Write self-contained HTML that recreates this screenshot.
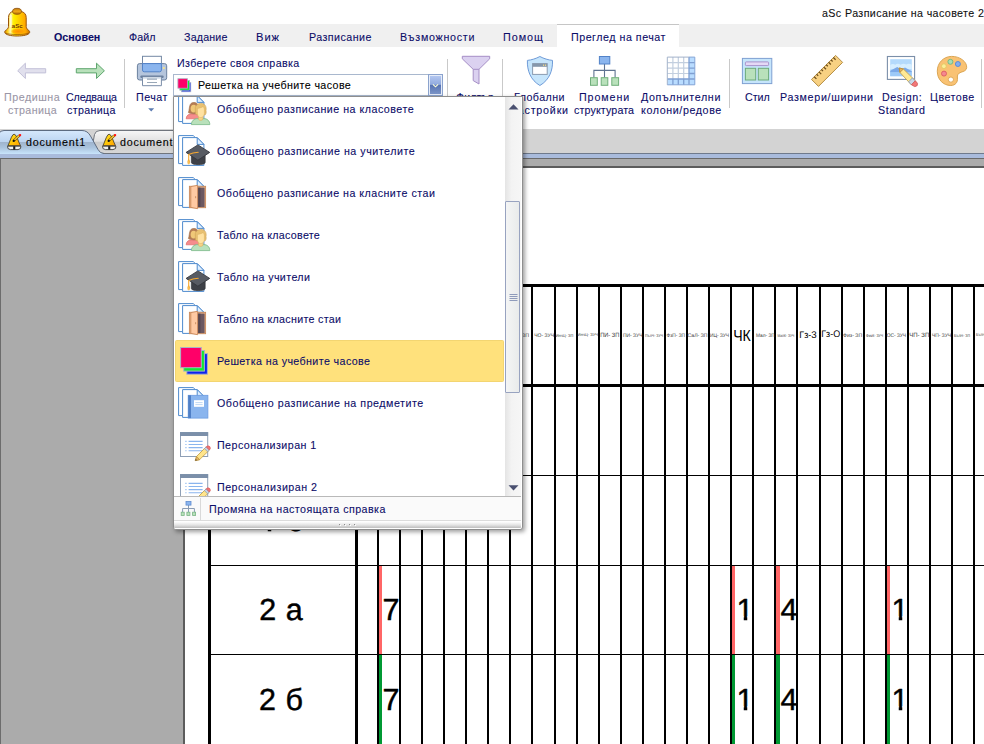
<!DOCTYPE html>
<html lang="bg">
<head>
<meta charset="utf-8">
<title>aSc Разписание на часовете</title>
<style>
*{box-sizing:border-box;margin:0;padding:0}
html,body{width:984px;height:744px;overflow:hidden;background:#fff}
body{position:relative;font-family:"Liberation Sans",sans-serif;font-size:11.5px;color:#0c0c68;-webkit-text-stroke:.1px currentColor}
.a{position:absolute}
.t{position:absolute;white-space:nowrap;line-height:14px;height:14px;font-size:11.5px}
.c{text-align:center}
svg{position:absolute;overflow:visible}
#menubar{left:0;top:24px;width:984px;height:23px;background:#f0f0f0}
#acttab{left:557px;top:24px;width:122px;height:23px;background:#fff;border-top:1px solid #c6c6c6}
.sep{position:absolute;width:1px;top:59px;height:49px;background:#c9c9c9}
#tabstrip{left:0;top:129px;width:984px;height:24px;background:#d3d3d3}
#bluestrip{left:0;top:153px;width:984px;height:6px;background:#a9bbdc;border-top:1px solid #6f7a8c;border-bottom:1px solid #6a6a6a}
#work{left:0;top:159px;width:984px;height:585px;background:#ababab;border-left:1px solid #6c6c6c}
#page{left:183px;top:166px;width:801px;height:578px;background:#fff;border-left:2px solid #5c5c5c;border-top:2px solid #5c5c5c}
#popup{left:173px;top:96px;width:350px;height:434px;background:#fff;border:1px solid #8e8e8e;border-radius:0 0 3px 3px;box-shadow:2px 2px 4px rgba(0,0,0,.38)}
#hl{background:#ffe17c;border:1px solid #f3d571;border-radius:1.5px}
#combo{left:173px;top:74px;width:270px;height:22px;background:#fff;border:1px solid #a9b8ce}
#combobtn{left:428px;top:74px;width:15px;height:22px;background:linear-gradient(#b6c9f2 0%,#92abde 47%,#5672b2 50%,#7f98c9 100%);border:1px solid #8ba3cd;box-shadow:inset 0 0 0 1px #e6ecf8}
#sbar{left:331px;top:0;width:16px;height:399px;background:linear-gradient(90deg,#e4e4e4,#f3f3f3 40%,#f6f6f6)}
#thumb{left:331px;top:104px;width:15px;height:192px;background:linear-gradient(90deg,#f4f5f5,#e9ebeb);border:1px solid #98a3c0;border-radius:1px}
#pfoot{left:0;top:399px;width:347px;height:25px;background:#fafafa;border-top:1px solid #b9b9b9;border-bottom:1px solid #dcdcdc}
#pgut{left:26px;top:401px;width:1px;height:22px;background:#d9d9d9}
#pgrip{left:0;top:424px;width:347px;height:8px;background:linear-gradient(#fff 0,#fdfdfd 12%,#e4e4e4 50%,#bebebe 87%,#fff 88%);border-radius:0 0 2px 2px}
</style>
</head>
<body>

<div class="a" id="menubar"></div><div class="a" id="acttab"></div>
<div class="a" id="tabstrip"></div><div class="a" id="bluestrip"></div>
<div class="a" id="work"></div><div class="a" id="page"></div>
<svg class="a" id="tbl" style="left:0;top:0" width="984" height="744" viewBox="0 0 984 744" font-family="Liberation Sans, sans-serif">
<g fill="#000" shape-rendering="crispEdges">
<rect x="208" y="284" width="776" height="3"/>
<rect x="208" y="384" width="776" height="3"/>
<rect x="208" y="475" width="776" height="1"/>
<rect x="208" y="565" width="776" height="1"/>
<rect x="208" y="654" width="776" height="1"/>
<rect x="208" y="284" width="3" height="460"/>
<rect x="355" y="284" width="3" height="460"/>
<rect x="377" y="286" width="2" height="458"/>
<rect x="399" y="286" width="2" height="458"/>
<rect x="421" y="286" width="2" height="458"/>
<rect x="443" y="286" width="2" height="458"/>
<rect x="465" y="286" width="2" height="458"/>
<rect x="487" y="286" width="2" height="458"/>
<rect x="509" y="286" width="2" height="458"/>
<rect x="531" y="286" width="2" height="458"/>
<rect x="554" y="286" width="2" height="458"/>
<rect x="576" y="286" width="2" height="458"/>
<rect x="598" y="286" width="2" height="458"/>
<rect x="620" y="286" width="2" height="458"/>
<rect x="642" y="286" width="2" height="458"/>
<rect x="664" y="286" width="2" height="458"/>
<rect x="686" y="286" width="2" height="458"/>
<rect x="708" y="286" width="2" height="458"/>
<rect x="730" y="286" width="2" height="458"/>
<rect x="752" y="286" width="2" height="458"/>
<rect x="774" y="286" width="2" height="458"/>
<rect x="796" y="286" width="2" height="458"/>
<rect x="819" y="286" width="2" height="458"/>
<rect x="841" y="286" width="2" height="458"/>
<rect x="863" y="286" width="2" height="458"/>
<rect x="885" y="286" width="2" height="458"/>
<rect x="907" y="286" width="2" height="458"/>
<rect x="929" y="286" width="2" height="458"/>
<rect x="951" y="286" width="2" height="458"/>
<rect x="973" y="286" width="2" height="458"/>
</g>
<g shape-rendering="crispEdges">
<rect x="379" y="566" width="3" height="88" fill="#ff6666"/>
<rect x="379" y="655" width="3" height="89" fill="#009933"/>
<rect x="732" y="566" width="3" height="88" fill="#ff6666"/>
<rect x="732" y="655" width="3" height="89" fill="#009933"/>
<rect x="776" y="566" width="4" height="88" fill="#ff6666"/>
<rect x="776" y="655" width="4" height="89" fill="#009933"/>
<rect x="887" y="566" width="3" height="88" fill="#ff6666"/>
<rect x="887" y="655" width="3" height="89" fill="#009933"/>
</g>
<g fill="#000" font-size="30.5" text-rendering="geometricPrecision" stroke="#000" stroke-width=".45" stroke-linejoin="round" style="-webkit-text-stroke:0;word-spacing:1px">
<text x="282.4" y="531" text-anchor="middle">1 б</text>
<text x="281" y="620" text-anchor="middle">2 а</text>
<text x="281" y="710" text-anchor="middle">2 б</text>
<text x="382.6" y="620">7</text>
<text x="736.6" y="620">1</text>
<text x="780.4" y="620">4</text>
<text x="891.6" y="620">1</text>
<text x="382.6" y="710">7</text>
<text x="736.6" y="710">1</text>
<text x="780.4" y="710">4</text>
<text x="891.6" y="710">1</text>
</g>
<g fill="#fff">
<rect x="737.5" y="616.3" width="6.25" height="5"/><rect x="747.25" y="616.3" width="4.75" height="5"/>
<rect x="892.5" y="616.3" width="6.25" height="5"/><rect x="902.25" y="616.3" width="4.75" height="5"/>
<rect x="737.5" y="706.3" width="6.25" height="5"/><rect x="747.25" y="706.3" width="4.75" height="5"/>
<rect x="892.5" y="706.3" width="6.25" height="5"/><rect x="902.25" y="706.3" width="4.75" height="5"/>
<rect x="261" y="527" width="6.75" height="5.5"/><rect x="271.25" y="527" width="7" height="5.5"/>
</g>
<g fill="#3a3a3a" style="-webkit-text-stroke:0" text-rendering="geometricPrecision">
<text x="511" y="337" font-size="5.2" textLength="18.0" lengthAdjust="spacingAndGlyphs">ЧО- ЗП</text>
<text x="534.2" y="337" font-size="5.2" textLength="19.8" lengthAdjust="spacingAndGlyphs">ЧО- ЗУЧ</text>
<text x="555.8" y="337" font-size="4.1" textLength="17.5" lengthAdjust="spacingAndGlyphs">ИнчЦ- ЗП</text>
<text x="577.5" y="335.6" font-size="4.1" textLength="20.5" lengthAdjust="spacingAndGlyphs">ИнчЦ- ЗУЧ</text>
<text x="600.3" y="337.3" font-size="6.2" textLength="18.9" lengthAdjust="spacingAndGlyphs">ПИ- ЗП</text>
<text x="623" y="337" font-size="5.2" textLength="19.5" lengthAdjust="spacingAndGlyphs">ПИ- ЗУЧ</text>
<text x="645" y="337" font-size="4.1" textLength="18.0" lengthAdjust="spacingAndGlyphs">ПълЧ- ЗУЧ</text>
<text x="666.5" y="337" font-size="5.2" textLength="18.5" lengthAdjust="spacingAndGlyphs">ФзП- ЗП</text>
<text x="687.5" y="337" font-size="5.2" textLength="20.0" lengthAdjust="spacingAndGlyphs">СаЛ- ЗП</text>
<text x="710" y="337" font-size="5.2" textLength="19.0" lengthAdjust="spacingAndGlyphs">ИЦ- ЗУЧ</text>
<text x="733.2" y="341" font-size="16" fill="#000" textLength="17.6" lengthAdjust="spacingAndGlyphs">ЧК</text>
<text x="756" y="337" font-size="5.2" textLength="18.7" lengthAdjust="spacingAndGlyphs">Мал- ЗП</text>
<text x="777.5" y="337" font-size="4.1" textLength="16.7" lengthAdjust="spacingAndGlyphs">МалК- ЗУЧ</text>
<text x="799.3" y="337.5" font-size="9.6" fill="#000" textLength="17.5" lengthAdjust="spacingAndGlyphs">Гз-З</text>
<text x="821.2" y="337.2" font-size="9.6" fill="#000" textLength="19.0" lengthAdjust="spacingAndGlyphs">Гз-О</text>
<text x="843" y="337" font-size="5.2" textLength="19.2" lengthAdjust="spacingAndGlyphs">Физ- ЗП</text>
<text x="866" y="337" font-size="4.1" textLength="17.0" lengthAdjust="spacingAndGlyphs">ФизК- ЗУЧ</text>
<text x="886.8" y="337" font-size="5.2" textLength="19.2" lengthAdjust="spacingAndGlyphs">ОС- ЗУЧ</text>
<text x="909.3" y="337.3" font-size="6.2" textLength="19.9" lengthAdjust="spacingAndGlyphs">ЧП- ЗП</text>
<text x="932" y="337" font-size="5.2" textLength="19.0" lengthAdjust="spacingAndGlyphs">ЧП- ЗУЧ</text>
<text x="954" y="337" font-size="4.1" textLength="16.0" lengthAdjust="spacingAndGlyphs">БълН- ЗП</text>
<text x="976" y="336" font-size="4.1" textLength="17.0" lengthAdjust="spacingAndGlyphs">БълН- ЗУЧ</text>
</g>
</svg>
<div class="sep" style="left:124px"></div>
<div class="sep" style="left:447px"></div>
<div class="sep" style="left:502px"></div>
<div class="sep" style="left:729px"></div>
<div class="sep" style="left:981px"></div>
<div class="a" id="combo"></div>
<div class="a" id="combobtn"></div>
<svg id="doctabs" style="left:0;top:129px" width="200" height="30" viewBox="0 0 200 30">
<defs>
<linearGradient id="gAct" x1="0" y1="0" x2="0" y2="1"><stop offset="0" stop-color="#d3e6fb"/><stop offset=".05" stop-color="#d3e6fb"/><stop offset=".47" stop-color="#bdd5f1"/><stop offset=".5" stop-color="#9fb4cd"/><stop offset=".72" stop-color="#aac3dd"/><stop offset="1" stop-color="#c8e4fb"/></linearGradient>
<linearGradient id="gIn" x1="0" y1="0" x2="0" y2="1"><stop offset="0" stop-color="#f7f7f7"/><stop offset=".47" stop-color="#e1e1e1"/><stop offset=".5" stop-color="#cbcbcb"/><stop offset="1" stop-color="#d7d7d7"/></linearGradient>
</defs>
<path d="M91 24.5 L94.5 5.5 Q95.5 1.5 100 1.5 L176 1.5 Q182 1.5 185 7 L195 24.5 Z" fill="url(#gIn)" stroke="#70757d" stroke-width="1"/>
<path d="M-1 25 L-1 4.5 Q0 1.5 4 1.5 L82 1.5 Q87.5 1.5 90.5 7 L98 20.5 Q100 24.5 104 24.5 L104 25 Z" fill="url(#gAct)"/><path d="M-1 4.5 Q0 1.5 4 1.5 L82 1.5 Q87.5 1.5 90.5 7 L98 20.5 Q100 24.5 104 24.5" fill="none" stroke="#5d6b80" stroke-width="1"/>
<rect x="0" y="25" width="104" height="4" fill="#a9bbdc"/>
</svg>

<svg id="ricons" style="left:0;top:0" width="984" height="160" viewBox="0 0 984 160" font-family="Liberation Sans, sans-serif">
<defs>
<linearGradient id="gBell" x1="0" y1="0" x2="1" y2="0"><stop offset="0" stop-color="#d98a00"/><stop offset=".12" stop-color="#ffd21c"/><stop offset=".22" stop-color="#fff6b0"/><stop offset=".36" stop-color="#fff000"/><stop offset=".62" stop-color="#ffc800"/><stop offset=".85" stop-color="#ffa400"/><stop offset="1" stop-color="#c87400"/></linearGradient>
<radialGradient id="gBellLow" cx=".5" cy=".5" r=".5"><stop offset="0" stop-color="#ff8a00" stop-opacity=".95"/><stop offset=".7" stop-color="#ff9a00" stop-opacity=".7"/><stop offset="1" stop-color="#ffa800" stop-opacity="0"/></radialGradient>
<linearGradient id="gTb" x1="0" y1="0" x2="1" y2="1"><stop offset="0" stop-color="#ffe828"/><stop offset=".5" stop-color="#ffc808"/><stop offset="1" stop-color="#ff9c00"/></linearGradient>
<linearGradient id="gKnob" x1="0" y1="0" x2="0" y2="1"><stop offset="0" stop-color="#c07810"/><stop offset=".5" stop-color="#f0a818"/><stop offset="1" stop-color="#b06808"/></linearGradient>
</defs>
<!-- app bell -->
<g>
<path d="M8.5 26.5 L8.5 17.5 C8.5 14 10.5 12 13 11.4 L21 11.4 C24 12 26.2 14 26.2 17.5 L26.2 26.5 C26.2 28.5 27.5 29.5 28.8 30.4 C29.6 31 29.8 31.8 29.6 32.6 C29 34.8 23.5 36 17.2 36 C11 36 5.4 34.8 4.8 32.6 C4.6 31.8 4.8 31 5.6 30.4 C7 29.5 8.5 28.5 8.5 26.5 Z" fill="url(#gBell)" stroke="#9a5408" stroke-width="1"/>
<path d="M5.6 33 C8 35 26 35 28.8 33" fill="none" stroke="#8a4a06" stroke-width=".9" opacity=".75"/>
<ellipse cx="18" cy="31.4" rx="7.4" ry="3.2" fill="url(#gBellLow)"/>
<path d="M10.9 15.5 L10.9 26.5" stroke="#fffbe0" stroke-width="1.7" stroke-linecap="round" opacity=".75"/>
<ellipse cx="17" cy="11.3" rx="4.4" ry="3" fill="url(#gKnob)" stroke="#8a4e0a" stroke-width=".8"/>
<text x="17.2" y="28.3" font-size="6" font-weight="bold" text-anchor="middle" fill="#733808" style="-webkit-text-stroke:0">aSc</text>
</g>
<!-- arrows -->
<path d="M17.7 70.8 L25.4 63.2 L25.4 68.7 L45.7 68.7 L45.7 72.9 L25.4 72.9 L25.4 78.5 Z" fill="#e1e0ed" stroke="#c3c1d8" stroke-width="1" stroke-linejoin="miter"/>
<path d="M104.4 70.8 L96.5 63.2 L96.5 68.7 L76.3 68.7 L76.3 72.9 L96.5 72.9 L96.5 78.5 Z" fill="#b9e1bb" stroke="#5ea66e" stroke-width="1" stroke-linejoin="miter"/>
<!-- printer -->
<g>
<rect x="142.5" y="56.3" width="18.9" height="8" fill="#fff" stroke="#7388a4" stroke-width="1"/>
<rect x="137.4" y="63.6" width="29.3" height="16.4" rx="2.2" fill="#b5c5dc" stroke="#6b809e" stroke-width="1"/>
<path d="M142.5 63.6 H161.4 V70 Q161.4 71.8 159.6 71.8 H144.3 Q142.5 71.8 142.5 70 Z" fill="#8bb5ee" stroke="#5282c8" stroke-width="1"/>
<circle cx="163.9" cy="67.9" r="1" fill="#ffe880"/>
<rect x="140.3" y="75.6" width="23.4" height="2.4" rx="1.2" fill="#6b809e"/>
<path d="M142.5 77 H161.4 V85.7 H142.5 Z" fill="#fff" stroke="#7a8da8" stroke-width="1"/>
<path d="M142.9 77.4 H161 V79 H142.9 Z" fill="#dde6f0"/>
<path d="M147 79.1 H157 M147 82.5 H157" stroke="#9aa8b8" stroke-width="1.1"/>
</g>
<path d="M148.2 108.3 L154.2 108.3 L151.2 111.4 Z" fill="#5a7ab0"/>
<!-- funnel -->
<path d="M462.3 56.3 H489.7 V58.8 L479 69.3 V84 L473.2 80.6 V69.3 L462.3 58.8 Z" fill="#dbd1f0" stroke="#a58ec6" stroke-width="1" stroke-linejoin="round"/>
<path d="M473.2 69.3 H479" stroke="#a58ec6" stroke-width="1"/>
<!-- shield -->
<path d="M539.9 56.5 C536 58.6 531.5 60 527.4 60.4 C527 70.5 530.5 80 539.9 85.5 C549.3 80 552.9 70.5 552.5 60.4 C548.3 60 543.8 58.6 539.9 56.5 Z" fill="#c6e5fb" stroke="#6f9bd8" stroke-width="1"/>
<rect x="532.6" y="63.6" width="14.6" height="10.8" fill="#fff" stroke="#8a9bb0" stroke-width="1"/>
<rect x="532.6" y="63.6" width="14.6" height="3.2" fill="#8597ab"/>
<rect x="543" y="64.6" width="1.1" height="1.2" fill="#ffe080"/><rect x="545" y="64.6" width="1.1" height="1.2" fill="#ffe080"/>
<!-- org chart -->
<g>
<path d="M604.5 64 V77.5 M593.9 77.5 V70.4 H615.1 V77.5" fill="none" stroke="#5f7391" stroke-width="1.1"/>
<rect x="599.4" y="56.5" width="10.4" height="7.5" fill="#8bb5ee" stroke="#5282c8" stroke-width="1"/>
<rect x="590.5" y="77.7" width="6.8" height="7.6" fill="#b9e1bb" stroke="#70ae7b" stroke-width="1"/>
<rect x="601.2" y="77.7" width="6.6" height="7.6" fill="#b9e1bb" stroke="#70ae7b" stroke-width="1"/>
<rect x="611.8" y="77.7" width="6.8" height="7.6" fill="#b9e1bb" stroke="#70ae7b" stroke-width="1"/>
</g>
<!-- grid -->
<g>
<rect x="667.3" y="57.1" width="27.5" height="27.7" fill="#fff"/>
<rect x="689" y="57.1" width="5.8" height="27.7" fill="#b9dcff"/>
<rect x="667.3" y="79" width="27.5" height="5.8" fill="#b9dcff"/>
<path d="M672.9 57.1 V79 M678.3 57.1 V79 M683.7 57.1 V79 M667.3 62.6 H689 M667.3 68.1 H689 M667.3 73.5 H689" stroke="#c3cfdf" stroke-width="1.2" fill="none"/>
<path d="M689 57.1 V84.8 M667.3 79 H694.8 M672.9 79 V84.8 M678.3 79 V84.8 M683.7 79 V84.8 M689 62.6 H694.8 M689 68.1 H694.8 M689 73.5 H694.8" stroke="#7f9fd2" stroke-width="1.3" fill="none"/>
<path d="M667.3 84.8 V57.1 H689" stroke="#a3b3ca" stroke-width="1" fill="none"/>
<path d="M689 57.1 H694.8 V84.8 H667.3" stroke="#86a6d6" stroke-width="1" fill="none"/>
</g>
<!-- style -->
<g>
<rect x="742.4" y="58.4" width="29.4" height="25.2" fill="#c6e5fb" stroke="#7fa0d2" stroke-width="1"/>
<rect x="745.4" y="61.9" width="23.2" height="3.7" rx=".8" fill="#e4d9f6" stroke="#a992ca" stroke-width="1"/>
<rect x="745.4" y="68.3" width="10.3" height="11.7" fill="#b9e1bb" stroke="#6cab7a" stroke-width="1"/>
<rect x="758.3" y="68.3" width="10.3" height="11.7" fill="#b9e1bb" stroke="#6cab7a" stroke-width="1"/>
</g>
<!-- ruler -->
<g>
<path d="M835.6 55.4 L842.6 62.4 L818.5 86.4 L811.5 79.4 Z" fill="#f8d182" stroke="#b48d44" stroke-width="1" stroke-linejoin="round"/>
<path d="M814.2 76.7 l2.2 2.2 M816.6 74.3 l1.6 1.6 M819 71.9 l2.2 2.2 M821.4 69.5 l1.6 1.6 M823.8 67.1 l2.2 2.2 M826.2 64.7 l1.6 1.6 M828.6 62.3 l2.2 2.2 M831 59.9 l1.6 1.6 M833.4 57.5 l2.2 2.2" stroke="#6e4e1a" stroke-width="1.25" fill="none"/>
</g>
<!-- design -->
<g>
<rect x="887.4" y="56.5" width="27.2" height="22.9" fill="#fff" stroke="#7b8fa9" stroke-width="1.1"/>
<rect x="890.2" y="59.2" width="21.6" height="17" fill="#b4dafc"/>
<path d="M890.2 65 q2.5 -1.6 5 -.3 q2.6 -1.8 5.4 0 q2.8 -1.8 5.6 -.2 q2.6 -1.4 5.6 .2 V69 H890.2 Z" fill="#d6eeff"/>
<path d="M890.2 70.8 L897.2 67 L901.5 69.5 L905 67.4 L911.8 71.2 V72.4 H890.2 Z" fill="#7ba9e8"/>
<rect x="890.2" y="72.2" width="21.6" height="4" fill="#9dcaf8"/>
<path d="M899.2 68 L903.4 69 L915.6 81 L911.6 85 L899.9 72.4 Z" fill="#ffe994" stroke="#c2a24e" stroke-width=".9" stroke-linejoin="round"/>
<path d="M899.2 68 L903.4 69 L899.9 72.4 Z" fill="#e7b45c" stroke="#b88a3a" stroke-width=".8" stroke-linejoin="round"/>
<path d="M912.4 78 L915.3 80.8 L911.4 84.8 L908.6 81.8 Z" fill="#c9d8e8" stroke="#8a9bb0" stroke-width=".8"/>
<path d="M915.3 80.8 Q918.6 83.2 917.2 85.6 Q915.2 88 911.4 84.8 Z" fill="#f27878" stroke="#d05a5a" stroke-width=".8"/>
</g>
<!-- palette -->
<g>
<path d="M951.5 56.4 C959.5 56.2 966.9 61.5 966.7 67.4 C966.6 70.6 963.6 71.4 961 72.2 C958.2 73.2 957 75 957.4 78 C957.9 82.4 955.2 85.5 950.8 85.5 C943.2 85.5 937.3 79.4 937.3 71.2 C937.3 62.8 943.5 56.6 951.5 56.4 Z" fill="#f9c273" stroke="#dba654" stroke-width="1"/>
<circle cx="950.4" cy="61.8" r="2.5" fill="#a9dcb4" stroke="#6db882" stroke-width=".9"/>
<circle cx="957.9" cy="64" r="2.5" fill="#82aef0" stroke="#5286d8" stroke-width=".9"/>
<circle cx="943.9" cy="66.2" r="2.4" fill="#fbee9a" stroke="#e2c860" stroke-width=".9"/>
<circle cx="944" cy="73.6" r="2.5" fill="#f48890" stroke="#dc5a62" stroke-width=".9"/>
<circle cx="950.9" cy="79.6" r="2.6" fill="#fff" stroke="#dba654" stroke-width=".9"/>
</g>
<!-- combo small icon -->
<g>
<rect x="181.6" y="82.6" width="9.2" height="9.2" fill="#0a22f0" stroke="#aab3c6" stroke-width=".7"/>
<rect x="179.8" y="80.6" width="9.6" height="9.6" fill="#12e636" stroke="#aab3c6" stroke-width=".7"/>
<rect x="177.9" y="78.7" width="9.6" height="9.5" fill="#ff0068" stroke="#aab3c6" stroke-width=".8"/>
</g>
<path d="M432.9 84.3 L435.5 86.8 L438.1 84.3" fill="none" stroke="#ffffd6" stroke-width="1.1"/>
<!-- doc tab bells -->
<g>
<path d="M12.9 134.8 Q14.1 133.7 15.3 134.8 C17.6 137.6 18.4 142 20.5 145.7 L7.9 145.7 C9.9 142 10.7 137.6 12.9 134.8 Z" fill="url(#gTb)" stroke="#4d4430" stroke-width=".9" stroke-linejoin="round"/>
<path d="M7.5 146.2 Q7 149.3 10.4 149.6 L18 149.6 Q21.4 149.3 20.9 146.2 Z" fill="#f1f1f1" stroke="#3c3c3c" stroke-width=".9" stroke-linejoin="round"/>
<rect x="13.2" y="146.2" width="2.1" height="3.4" fill="#1c1c1c"/>
<path d="M13.9 140.6 L19.4 135.3" stroke="#6e5208" stroke-width="2.5" stroke-linecap="butt"/>
<path d="M14.4 140.1 L19.2 135.5" stroke="#ffcf3a" stroke-width="1.2" stroke-linecap="butt"/>
<circle cx="13.7" cy="140.9" r="1.15" fill="#111"/>
<rect x="19" y="134.1" width="2.1" height="2.1" fill="#ff1414"/>
</g>
<g transform="translate(95 0)">
<path d="M12.9 134.8 Q14.1 133.7 15.3 134.8 C17.6 137.6 18.4 142 20.5 145.7 L7.9 145.7 C9.9 142 10.7 137.6 12.9 134.8 Z" fill="url(#gTb)" stroke="#4d4430" stroke-width=".9" stroke-linejoin="round"/>
<path d="M7.5 146.2 Q7 149.3 10.4 149.6 L18 149.6 Q21.4 149.3 20.9 146.2 Z" fill="#f1f1f1" stroke="#3c3c3c" stroke-width=".9" stroke-linejoin="round"/>
<rect x="13.2" y="146.2" width="2.1" height="3.4" fill="#1c1c1c"/>
<path d="M13.9 140.6 L19.4 135.3" stroke="#6e5208" stroke-width="2.5" stroke-linecap="butt"/>
<path d="M14.4 140.1 L19.2 135.5" stroke="#ffcf3a" stroke-width="1.2" stroke-linecap="butt"/>
<circle cx="13.7" cy="140.9" r="1.15" fill="#111"/>
<rect x="19" y="134.1" width="2.1" height="2.1" fill="#ff1414"/>
</g>
</svg>

<div class="t" style="left:822.4px;top:6.02px;transform:scaleX(0.93);transform-origin:0 0;letter-spacing:0.42px;color:#111;">aSc Разписание на часовете 2</div>
<div class="t" style="left:54.0px;top:30.02px;transform:scaleX(0.93);transform-origin:0 0;letter-spacing:0.04px;font-weight:bold;">Основен</div>
<div class="t" style="left:128.5px;top:30.02px;transform:scaleX(0.93);transform-origin:0 0;letter-spacing:0.09px;">Файл</div>
<div class="t" style="left:184.0px;top:30.02px;transform:scaleX(0.93);transform-origin:0 0;letter-spacing:0.18px;">Задание</div>
<div class="t" style="left:256.3px;top:30.02px;transform:scaleX(0.9696);transform-origin:0 0;letter-spacing:1.0px;">Виж</div>
<div class="t" style="left:308.5px;top:30.02px;transform:scaleX(0.93);transform-origin:0 0;letter-spacing:0.47px;">Разписание</div>
<div class="t" style="left:399.7px;top:30.02px;transform:scaleX(0.93);transform-origin:0 0;letter-spacing:0.78px;">Възможности</div>
<div class="t" style="left:502.5px;top:30.02px;transform:scaleX(0.9381);transform-origin:0 0;letter-spacing:1.0px;">Помощ</div>
<div class="t" style="left:570.8px;top:30.02px;transform:scaleX(0.93);transform-origin:0 0;letter-spacing:0.55px;">Преглед на печат</div>
<div class="t" style="left:3.8px;top:90.02px;transform:scaleX(0.93);transform-origin:0 0;letter-spacing:0.56px;color:#9a96a6;">Предишна</div>
<div class="t" style="left:7.5px;top:103.02px;transform:scaleX(0.93);transform-origin:0 0;letter-spacing:0.41px;color:#9a96a6;">страница</div>
<div class="t" style="left:65.8px;top:90.02px;transform:scaleX(0.93);transform-origin:0 0;letter-spacing:-0.18px;">Следваща</div>
<div class="t" style="left:66.7px;top:103.02px;transform:scaleX(0.93);transform-origin:0 0;letter-spacing:0.35px;">страница</div>
<div class="t" style="left:135.8px;top:90.02px;transform:scaleX(0.93);transform-origin:0 0;letter-spacing:0.53px;">Печат</div>
<div class="t" style="left:176.6px;top:56.02px;transform:scaleX(0.93);transform-origin:0 0;letter-spacing:0.4px;">Изберете своя справка</div>
<div class="t" style="left:198.3px;top:78.02px;transform:scaleX(0.93);transform-origin:0 0;letter-spacing:0.41px;color:#000;">Решетка на учебните часове</div>
<div class="t" style="left:455.8px;top:90.02px;transform:scaleX(0.93);transform-origin:0 0;letter-spacing:0.02px;">Филтър</div>
<div class="t" style="left:513.9px;top:90.02px;transform:scaleX(0.93);transform-origin:0 0;letter-spacing:0.48px;">Глобални</div>
<div class="t" style="left:510.6px;top:103.02px;transform:scaleX(0.93);transform-origin:0 0;letter-spacing:0.87px;">настройки</div>
<div class="t" style="left:578.6px;top:90.02px;transform:scaleX(0.93);transform-origin:0 0;letter-spacing:0.98px;">Промени</div>
<div class="t" style="left:574.0px;top:103.02px;transform:scaleX(0.93);transform-origin:0 0;letter-spacing:0.13px;">структурата</div>
<div class="t" style="left:641.0px;top:90.02px;transform:scaleX(0.93);transform-origin:0 0;letter-spacing:0.68px;">Допълнителни</div>
<div class="t" style="left:641.0px;top:103.02px;transform:scaleX(0.93);transform-origin:0 0;letter-spacing:0.65px;">колони/редове</div>
<div class="t" style="left:744.7px;top:90.02px;transform:scaleX(0.93);transform-origin:0 0;letter-spacing:-0.06px;">Стил</div>
<div class="t" style="left:779.9px;top:90.02px;transform:scaleX(0.93);transform-origin:0 0;letter-spacing:0.74px;">Размери/ширини</div>
<div class="t" style="left:881.6px;top:90.02px;transform:scaleX(0.93);transform-origin:0 0;letter-spacing:0.64px;">Design:</div>
<div class="t" style="left:878.3px;top:103.02px;transform:scaleX(0.93);transform-origin:0 0;letter-spacing:0.56px;">Standard</div>
<div class="t" style="left:929.9px;top:90.02px;transform:scaleX(0.93);transform-origin:0 0;letter-spacing:0.52px;">Цветове</div>
<div class="t" style="left:25.8px;top:135.02px;transform:scaleX(0.93);transform-origin:0 0;letter-spacing:0.83px;color:#000;">document1</div>
<div class="t" style="left:120.3px;top:135.02px;transform:scaleX(0.93);transform-origin:0 0;letter-spacing:0.83px;color:#000;">document2</div>
<div class="a" id="popup">
<div class="a" id="plist" style="left:0;top:0;width:330px;height:399px;overflow:hidden">
<div class="a" style="left:4px;top:-4px;width:32px;height:32px"><svg style="left:0;top:0" width="32" height="32" viewBox="0 0 32 32"><path d="M4.1 28.6 H0.6 V0.6 H15.2 L17.4 2.6" fill="#fff" stroke="#4e8ace" stroke-width="1"/><path d="M4.6 2.6 H19.2 L25.9 9.4 V30.4 H4.6 Z" fill="#fff" stroke="#4e8ace" stroke-width="1" stroke-linejoin="round"/><path d="M19.2 2.6 V9.4 H25.9 Z" fill="#dfefff" stroke="#4e8ace" stroke-width="1" stroke-linejoin="round"/>
<path d="M8.2 25.8 C8.2 22.6 10.6 20.8 14 20.8 H17.4 C20 20.8 21 22.4 21 25.8 Z" fill="#f58d8d" stroke="#e06a6a" stroke-width=".7"/>
<path d="M10.4 19.6 C11.4 17.6 11 13.4 12.4 11.2 C13.6 9 18 8.8 19.6 11.2 C21 13.6 20.4 17.6 21.4 19.6 C18.6 21.2 13.2 21.2 10.4 19.6 Z" fill="#b57c54" stroke="#9c6840" stroke-width=".6"/>
<ellipse cx="15.6" cy="15.6" rx="3" ry="3.9" fill="#f0c878"/>
<path d="M13.4 31.6 C13.4 28 16 25.6 19.6 25.6 H25.8 C29.4 25.6 31.8 28 31.8 31.6 Z" fill="#b9e1bb" stroke="#76b684" stroke-width=".8"/>
<path d="M20.4 23.4 H25 V26.2 C24 27.8 21.4 27.8 20.4 26.2 Z" fill="#f7d488" stroke="#d8ae5e" stroke-width=".6"/>
<path d="M17.4 17.6 C16.6 13 19 10.4 22.8 10.4 C26.6 10.4 28.8 13 28 17.6 C28.4 19.4 28 21 27.2 21.8 C26 21.4 19.4 21.4 18.2 21.8 C17.4 21 17 19.4 17.4 17.6 Z" fill="#e9c172" stroke="#caa052" stroke-width=".6"/>
<path d="M19.4 15.4 C21.4 15.2 24 14.4 25.2 13.4 C25.8 14.6 26.2 15.2 26.4 16 V20.4 C26.4 22.8 24.6 24.6 22.8 24.6 C21 24.6 19.4 22.8 19.4 20.4 Z" fill="#ffe2a2" stroke="#d8ae5e" stroke-width=".5"/>
</svg>
</div>
<div class="t" style="left:43.4px;top:5.02px;transform:scaleX(0.93);transform-origin:0 0;letter-spacing:0.52px;">Обобщено разписание на класовете</div>
<div class="a" style="left:4px;top:38px;width:32px;height:32px"><svg style="left:0;top:0" width="32" height="32" viewBox="0 0 32 32"><path d="M4.1 28.6 H0.6 V0.6 H15.2 L17.4 2.6" fill="#fff" stroke="#4e8ace" stroke-width="1"/><path d="M4.6 2.6 H19.2 L25.9 9.4 V30.4 H4.6 Z" fill="#fff" stroke="#4e8ace" stroke-width="1" stroke-linejoin="round"/><path d="M19.2 2.6 V9.4 H25.9 Z" fill="#dfefff" stroke="#4e8ace" stroke-width="1" stroke-linejoin="round"/>
<path d="M13.3 20.4 V27.4 C13.3 30.4 27.2 30.4 27.2 27.4 V20.4 Z" fill="#3d4047" stroke="#303238" stroke-width=".6"/>
<path d="M8.1 17.4 L19.9 9.9 L31.7 17.4 L19.9 25.2 Z" fill="#575b63" stroke="#33363c" stroke-width=".9" stroke-linejoin="round"/>
<path d="M20.2 17.3 C17 17.6 13.6 18.2 10.7 19.4 V26" fill="none" stroke="#f8a930" stroke-width="1.1" stroke-linecap="round"/>
<path d="M10.7 24.6 C9.4 26 9.6 28.6 10.7 29.2 C11.8 28.6 12 26 10.7 24.6 Z" fill="#ffc860" stroke="#f0a020" stroke-width=".7"/>
</svg>
</div>
<div class="t" style="left:43.4px;top:47.02px;transform:scaleX(0.93);transform-origin:0 0;letter-spacing:0.56px;">Обобщено разписание на учителите</div>
<div class="a" style="left:4px;top:80px;width:32px;height:32px"><svg style="left:0;top:0" width="32" height="32" viewBox="0 0 32 32"><path d="M4.1 28.6 H0.6 V0.6 H15.2 L17.4 2.6" fill="#fff" stroke="#4e8ace" stroke-width="1"/><path d="M4.6 2.6 H19.2 L25.9 9.4 V30.4 H4.6 Z" fill="#fff" stroke="#4e8ace" stroke-width="1" stroke-linejoin="round"/><path d="M19.2 2.6 V9.4 H25.9 Z" fill="#dfefff" stroke="#4e8ace" stroke-width="1" stroke-linejoin="round"/>
<rect x="11.4" y="9.3" width="16.2" height="21.4" fill="#f0b486" stroke="#c98a5c" stroke-width=".9"/>
<rect x="19.8" y="10.6" width="6.8" height="19.4" fill="#6c5861"/>
<rect x="19.8" y="10.6" width="2.6" height="19.4" fill="#57464f"/>
<path d="M12.8 9.6 L19.6 8.3 V31.7 L12.8 30.4 Z" fill="#ffc9a2" stroke="#c98a5c" stroke-width=".9" stroke-linejoin="round"/>
<rect x="17.2" y="19.2" width=".9" height="2" fill="#c98a5c"/>
</svg>
</div>
<div class="t" style="left:43.4px;top:89.02px;transform:scaleX(0.93);transform-origin:0 0;letter-spacing:0.51px;">Обобщено разписание на класните стаи</div>
<div class="a" style="left:4px;top:122px;width:32px;height:32px"><svg style="left:0;top:0" width="32" height="32" viewBox="0 0 32 32"><path d="M4.1 28.6 H0.6 V0.6 H15.2 L17.4 2.6" fill="#fff" stroke="#4e8ace" stroke-width="1"/><path d="M4.6 2.6 H19.2 L25.9 9.4 V30.4 H4.6 Z" fill="#fff" stroke="#4e8ace" stroke-width="1" stroke-linejoin="round"/><path d="M19.2 2.6 V9.4 H25.9 Z" fill="#dfefff" stroke="#4e8ace" stroke-width="1" stroke-linejoin="round"/>
<path d="M8.2 25.8 C8.2 22.6 10.6 20.8 14 20.8 H17.4 C20 20.8 21 22.4 21 25.8 Z" fill="#f58d8d" stroke="#e06a6a" stroke-width=".7"/>
<path d="M10.4 19.6 C11.4 17.6 11 13.4 12.4 11.2 C13.6 9 18 8.8 19.6 11.2 C21 13.6 20.4 17.6 21.4 19.6 C18.6 21.2 13.2 21.2 10.4 19.6 Z" fill="#b57c54" stroke="#9c6840" stroke-width=".6"/>
<ellipse cx="15.6" cy="15.6" rx="3" ry="3.9" fill="#f0c878"/>
<path d="M13.4 31.6 C13.4 28 16 25.6 19.6 25.6 H25.8 C29.4 25.6 31.8 28 31.8 31.6 Z" fill="#b9e1bb" stroke="#76b684" stroke-width=".8"/>
<path d="M20.4 23.4 H25 V26.2 C24 27.8 21.4 27.8 20.4 26.2 Z" fill="#f7d488" stroke="#d8ae5e" stroke-width=".6"/>
<path d="M17.4 17.6 C16.6 13 19 10.4 22.8 10.4 C26.6 10.4 28.8 13 28 17.6 C28.4 19.4 28 21 27.2 21.8 C26 21.4 19.4 21.4 18.2 21.8 C17.4 21 17 19.4 17.4 17.6 Z" fill="#e9c172" stroke="#caa052" stroke-width=".6"/>
<path d="M19.4 15.4 C21.4 15.2 24 14.4 25.2 13.4 C25.8 14.6 26.2 15.2 26.4 16 V20.4 C26.4 22.8 24.6 24.6 22.8 24.6 C21 24.6 19.4 22.8 19.4 20.4 Z" fill="#ffe2a2" stroke="#d8ae5e" stroke-width=".5"/>
</svg>
</div>
<div class="t" style="left:43.4px;top:131.02px;transform:scaleX(0.93);transform-origin:0 0;letter-spacing:0.3px;">Табло на класовете</div>
<div class="a" style="left:4px;top:164px;width:32px;height:32px"><svg style="left:0;top:0" width="32" height="32" viewBox="0 0 32 32"><path d="M4.1 28.6 H0.6 V0.6 H15.2 L17.4 2.6" fill="#fff" stroke="#4e8ace" stroke-width="1"/><path d="M4.6 2.6 H19.2 L25.9 9.4 V30.4 H4.6 Z" fill="#fff" stroke="#4e8ace" stroke-width="1" stroke-linejoin="round"/><path d="M19.2 2.6 V9.4 H25.9 Z" fill="#dfefff" stroke="#4e8ace" stroke-width="1" stroke-linejoin="round"/>
<path d="M13.3 20.4 V27.4 C13.3 30.4 27.2 30.4 27.2 27.4 V20.4 Z" fill="#3d4047" stroke="#303238" stroke-width=".6"/>
<path d="M8.1 17.4 L19.9 9.9 L31.7 17.4 L19.9 25.2 Z" fill="#575b63" stroke="#33363c" stroke-width=".9" stroke-linejoin="round"/>
<path d="M20.2 17.3 C17 17.6 13.6 18.2 10.7 19.4 V26" fill="none" stroke="#f8a930" stroke-width="1.1" stroke-linecap="round"/>
<path d="M10.7 24.6 C9.4 26 9.6 28.6 10.7 29.2 C11.8 28.6 12 26 10.7 24.6 Z" fill="#ffc860" stroke="#f0a020" stroke-width=".7"/>
</svg>
</div>
<div class="t" style="left:43.4px;top:173.02px;transform:scaleX(0.93);transform-origin:0 0;letter-spacing:0.41px;">Табло на учители</div>
<div class="a" style="left:4px;top:206px;width:32px;height:32px"><svg style="left:0;top:0" width="32" height="32" viewBox="0 0 32 32"><path d="M4.1 28.6 H0.6 V0.6 H15.2 L17.4 2.6" fill="#fff" stroke="#4e8ace" stroke-width="1"/><path d="M4.6 2.6 H19.2 L25.9 9.4 V30.4 H4.6 Z" fill="#fff" stroke="#4e8ace" stroke-width="1" stroke-linejoin="round"/><path d="M19.2 2.6 V9.4 H25.9 Z" fill="#dfefff" stroke="#4e8ace" stroke-width="1" stroke-linejoin="round"/>
<rect x="11.4" y="9.3" width="16.2" height="21.4" fill="#f0b486" stroke="#c98a5c" stroke-width=".9"/>
<rect x="19.8" y="10.6" width="6.8" height="19.4" fill="#6c5861"/>
<rect x="19.8" y="10.6" width="2.6" height="19.4" fill="#57464f"/>
<path d="M12.8 9.6 L19.6 8.3 V31.7 L12.8 30.4 Z" fill="#ffc9a2" stroke="#c98a5c" stroke-width=".9" stroke-linejoin="round"/>
<rect x="17.2" y="19.2" width=".9" height="2" fill="#c98a5c"/>
</svg>
</div>
<div class="t" style="left:43.4px;top:215.02px;transform:scaleX(0.93);transform-origin:0 0;letter-spacing:0.32px;">Табло на класните стаи</div>
<div class="a" id="hl" style="left:1px;top:243px;width:329px;height:42px"></div>
<div class="a" style="left:4px;top:248px;width:32px;height:32px"><svg style="left:0;top:0" width="32" height="32" viewBox="0 0 32 32">
<rect x="8.8" y="8.6" width="20.6" height="20.6" fill="#0a22f0" stroke="#aab3c6" stroke-width="1"/>
<rect x="5.7" y="5.5" width="20.7" height="20.6" fill="#10e832" stroke="#aab3c6" stroke-width="1"/>
<rect x="2.6" y="2.5" width="20.7" height="20.2" fill="#ff0068" stroke="#aab3c6" stroke-width="1"/>
</svg>
</div>
<div class="t" style="left:42.5px;top:257.02px;transform:scaleX(0.93);transform-origin:0 0;letter-spacing:0.42px;">Решетка на учебните часове</div>
<div class="a" style="left:4px;top:290px;width:32px;height:32px"><svg style="left:0;top:0" width="32" height="32" viewBox="0 0 32 32"><path d="M4.1 28.6 H0.6 V0.6 H15.2 L17.4 2.6" fill="#fff" stroke="#4e8ace" stroke-width="1"/><path d="M4.6 2.6 H19.2 L25.9 9.4 V30.4 H4.6 Z" fill="#fff" stroke="#4e8ace" stroke-width="1" stroke-linejoin="round"/><path d="M19.2 2.6 V9.4 H25.9 Z" fill="#dfefff" stroke="#4e8ace" stroke-width="1" stroke-linejoin="round"/>
<rect x="10.2" y="8.3" width="19.7" height="22.8" fill="#8ab5ee" stroke="#6b9be0" stroke-width=".8"/>
<rect x="10.2" y="8.3" width="2.8" height="22.8" fill="#4f7fc6"/>
<rect x="16" y="13.2" width="10" height="6.6" fill="#fff"/>
<path d="M17.4 15.6 H24.6 M17.4 17.6 H24.6" stroke="#b8d2f2" stroke-width=".9"/>
</svg>
</div>
<div class="t" style="left:43.4px;top:299.02px;transform:scaleX(0.93);transform-origin:0 0;letter-spacing:0.56px;">Обобщено разписание на предметите</div>
<div class="a" style="left:4px;top:332px;width:32px;height:32px"><svg style="left:0;top:0" width="32" height="32" viewBox="0 0 32 32">
<rect x="2.5" y="3.6" width="27.2" height="23.9" fill="#fff" stroke="#8e9fb6" stroke-width="1"/>
<rect x="2" y="3.1" width="28.1" height="3.9" fill="#7b8fa9"/>
<path d="M10.6 12.4 H24.6 M10.6 15.5 H24.6 M10.6 18.6 H24.6 M10.6 21.7 H24.6" stroke="#8ab5ee" stroke-width="1.1"/>
<path d="M7 12.4 H8.8 M7 15.5 H8.8 M7 18.6 H8.8 M7 21.7 H8.8" stroke="#b4d0f4" stroke-width="1.1"/>
<path d="M17.3 31.6 L18.6 27.4 L27.6 18.4 L30.8 21.6 L21.6 30.6 Z" fill="#ffe58c" stroke="#c6a44c" stroke-width=".9" stroke-linejoin="round"/>
<path d="M17.3 31.6 L18.6 27.4 L21.6 30.6 Z" fill="#e6b866" stroke="#b88a3a" stroke-width=".7" stroke-linejoin="round"/>
<path d="M17.3 31.6 L17.8 30 L19 31.2 Z" fill="#444"/>
<path d="M26.4 19.6 L28.2 17.8 L31.4 21 L29.6 22.8 Z" fill="#c5d3e4" stroke="#8797ae" stroke-width=".7"/>
<path d="M28.2 17.8 Q30 16 31.8 17.6 Q33.2 19.4 31.4 21 Z" fill="#f27474" stroke="#d85a5a" stroke-width=".7"/>
</svg>
</div>
<div class="t" style="left:42.5px;top:341.02px;transform:scaleX(0.93);transform-origin:0 0;letter-spacing:0.47px;">Персонализиран 1</div>
<div class="a" style="left:4px;top:374px;width:32px;height:32px"><svg style="left:0;top:0" width="32" height="32" viewBox="0 0 32 32">
<rect x="2.5" y="3.6" width="27.2" height="23.9" fill="#fff" stroke="#8e9fb6" stroke-width="1"/>
<rect x="2" y="3.1" width="28.1" height="3.9" fill="#7b8fa9"/>
<path d="M10.6 12.4 H24.6 M10.6 15.5 H24.6 M10.6 18.6 H24.6 M10.6 21.7 H24.6" stroke="#8ab5ee" stroke-width="1.1"/>
<path d="M7 12.4 H8.8 M7 15.5 H8.8 M7 18.6 H8.8 M7 21.7 H8.8" stroke="#b4d0f4" stroke-width="1.1"/>
<path d="M17.3 31.6 L18.6 27.4 L27.6 18.4 L30.8 21.6 L21.6 30.6 Z" fill="#ffe58c" stroke="#c6a44c" stroke-width=".9" stroke-linejoin="round"/>
<path d="M17.3 31.6 L18.6 27.4 L21.6 30.6 Z" fill="#e6b866" stroke="#b88a3a" stroke-width=".7" stroke-linejoin="round"/>
<path d="M17.3 31.6 L17.8 30 L19 31.2 Z" fill="#444"/>
<path d="M26.4 19.6 L28.2 17.8 L31.4 21 L29.6 22.8 Z" fill="#c5d3e4" stroke="#8797ae" stroke-width=".7"/>
<path d="M28.2 17.8 Q30 16 31.8 17.6 Q33.2 19.4 31.4 21 Z" fill="#f27474" stroke="#d85a5a" stroke-width=".7"/>
</svg>
</div>
<div class="t" style="left:42.5px;top:383.02px;transform:scaleX(0.93);transform-origin:0 0;letter-spacing:0.53px;">Персонализиран 2</div>
</div>
<div class="a" id="sbar"></div>
<div class="a" id="thumb"></div>
<svg style="left:331px;top:0" width="17" height="399" viewBox="0 0 17 399">
<path d="M3.5 12.5 L8.5 7.2 L13.5 12.5 Z" fill="#4a5070"/>
<path d="M3.5 388.2 L13.5 388.2 L8.5 393.5 Z" fill="#4a5070"/>
<g stroke="#8f9bbb" stroke-width="1"><path d="M4.5 197.5h8M4.5 199.5h8M4.5 201.5h8M4.5 203.5h8"/></g>
</svg>
<div class="a" id="pfoot"></div>
<div class="a" id="pgut"></div>
<div class="a" id="pgrip"></div>
<svg style="left:165px;top:427px" width="18" height="2" viewBox="0 0 18 2" shape-rendering="crispEdges"><g fill="#8c8c8c"><rect x="0" y="0" width="1" height="1"/><rect x="5" y="0" width="1" height="1"/><rect x="10" y="0" width="1" height="1"/><rect x="15" y="0" width="1" height="1"/></g><g fill="#fff"><rect x="1" y="1" width="1" height="1"/><rect x="6" y="1" width="1" height="1"/><rect x="11" y="1" width="1" height="1"/><rect x="16" y="1" width="1" height="1"/></g></svg>
<svg style="left:7px;top:404px" width="16" height="17" viewBox="0 0 16 17">
<path d="M7.5 4 V11 M1.6 11 V7.5 H13.4 V11" fill="none" stroke="#8a9cb4" stroke-width="1"/>
<rect x="5" y=".5" width="5" height="3.6" fill="#8bb5ee" stroke="#5f8cd0" stroke-width=".8"/>
<rect x=".2" y="11.2" width="3" height="3.2" fill="#b9e1bb" stroke="#78b484" stroke-width=".8"/>
<rect x="5.9" y="11.2" width="3" height="3.2" fill="#b9e1bb" stroke="#78b484" stroke-width=".8"/>
<rect x="11.6" y="11.2" width="3" height="3.2" fill="#b9e1bb" stroke="#78b484" stroke-width=".8"/>
</svg>

<div class="t" style="left:34.7px;top:405.02px;transform:scaleX(0.93);transform-origin:0 0;letter-spacing:0.48px;">Промяна на настоящата справка</div>
</div>
</body></html>
